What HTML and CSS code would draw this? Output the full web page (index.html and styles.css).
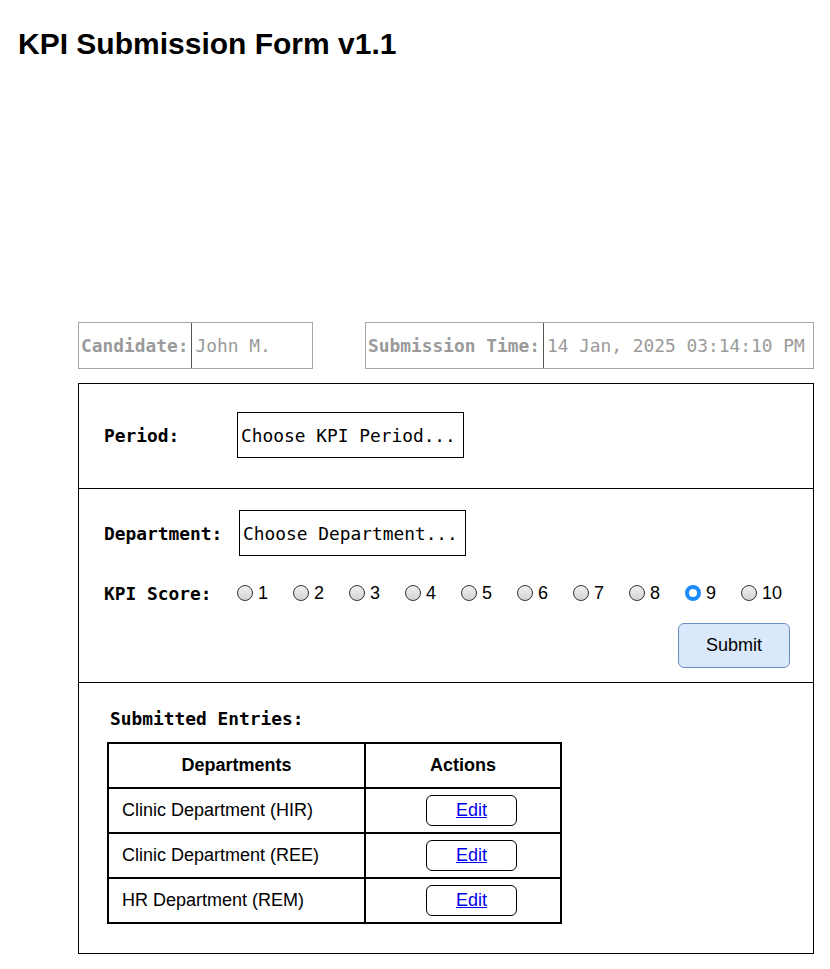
FILE: index.html
```html
<!DOCTYPE html>
<html>
<head>
<meta charset="utf-8">
<title>KPI Submission Form v1.1</title>
<link rel="stylesheet" href="styles.css">
</head>
<body>
<h1 class="title">KPI Submission Form v1.1</h1>
<div class="page">
  <div class="meta-row">
    <div class="meta meta-candidate">
      <span class="meta-label">Candidate:</span>
      <span class="meta-value">John M.</span>
    </div>
    <div class="meta meta-time">
      <span class="meta-label">Submission Time:</span>
      <span class="meta-value">14 Jan, 2025 03:14:10 PM</span>
    </div>
  </div>
  <div class="form-box">
    <section class="section section-period">
      <span class="label label-period">Period:</span>
      <div class="select select-period">Choose KPI Period...</div>
    </section>
    <section class="section section-dept">
      <div class="row row-dept">
        <span class="label label-dept">Department:</span>
        <div class="select select-dept">Choose Department...</div>
      </div>
      <div class="row row-score">
        <span class="label label-score">KPI Score:</span>
        <div class="radios">
          <label class="radio"><input type="radio" name="score"><span>1</span></label>
          <label class="radio"><input type="radio" name="score"><span>2</span></label>
          <label class="radio"><input type="radio" name="score"><span>3</span></label>
          <label class="radio"><input type="radio" name="score"><span>4</span></label>
          <label class="radio"><input type="radio" name="score"><span>5</span></label>
          <label class="radio"><input type="radio" name="score"><span>6</span></label>
          <label class="radio"><input type="radio" name="score"><span>7</span></label>
          <label class="radio"><input type="radio" name="score"><span>8</span></label>
          <label class="radio"><input type="radio" name="score" checked><span>9</span></label>
          <label class="radio"><input type="radio" name="score"><span>10</span></label>
        </div>
      </div>
      <div class="row row-submit">
        <button class="submit" type="button">Submit</button>
      </div>
    </section>
    <section class="section section-entries">
      <div class="entries-label">Submitted Entries:</div>
      <table class="entries">
        <thead>
          <tr><th class="col-dept">Departments</th><th class="col-act">Actions</th></tr>
        </thead>
        <tbody>
          <tr><td class="col-dept">Clinic Department (HIR)</td><td class="col-act"><span class="edit"><a href="#">Edit</a></span></td></tr>
          <tr><td class="col-dept">Clinic Department (REE)</td><td class="col-act"><span class="edit"><a href="#">Edit</a></span></td></tr>
          <tr><td class="col-dept">HR Department (REM)</td><td class="col-act"><span class="edit"><a href="#">Edit</a></span></td></tr>
        </tbody>
      </table>
    </section>
  </div>
</div>
</body>
</html>
```

FILE: styles.css
```css
* { box-sizing: border-box; }

body {
  margin: 0;
  background: #ffffff;
  font-family: "Liberation Sans", Arial, sans-serif;
  color: #000;
}

.title {
  margin: 0;
  padding: 25px 0 0 18px;
  font-size: 30px;
  font-weight: bold;
  line-height: 37px;
}

.page {
  padding: 260px 16px 16px 78px;
}

.meta-row {
  display: flex;
  gap: 52px;
  height: 47px;
}

.meta {
  display: flex;
  align-items: stretch;
  border: 1px solid #a6a6a6;
  font-family: "DejaVu Sans Mono", monospace;
  font-size: 17.85px;
  color: #9a9a9a;
}

.meta-candidate { width: 235px; }
.meta-time { width: 449px; }

.meta-label {
  display: flex;
  align-items: center;
  padding: 0 3px 0 2px;
  font-weight: bold;
  border-right: 1px solid #555;
}

.meta-value {
  display: flex;
  align-items: center;
  padding: 0 3px;
}

.form-box {
  margin-top: 14px;
  width: 736px;
  border: 1px solid #000;
}

.section + .section { border-top: 1px solid #000; }

.label {
  font-family: "DejaVu Sans Mono", monospace;
  font-weight: bold;
  font-size: 17.85px;
  flex-shrink: 0;
}

.select {
  height: 46px;
  width: 227px;
  flex-shrink: 0;
  border: 1px solid #000;
  display: flex;
  align-items: center;
  padding-left: 3px;
  font-family: "DejaVu Sans Mono", monospace;
  font-size: 17.85px;
  white-space: nowrap;
}

.section-period {
  height: 104px;
  display: flex;
  align-items: center;
  padding-left: 25px;
  padding-bottom: 2px;
}

.label-period { width: 133px; }

.section-dept {
  padding: 21px 23px 14px 25px;
  display: flex;
  flex-direction: column;
}

.row { display: flex; align-items: center; }

.label-dept { width: 135px; }

.row-score {
  margin-top: 26px;
  height: 22px;
}

.label-score { width: 133px; }

.radios { display: flex; flex-shrink: 0; }

.radio {
  width: 56px;
  flex-shrink: 0;
  display: flex;
  align-items: center;
  gap: 5px;
  font-size: 18px;
}

.radio input {
  appearance: none;
  -webkit-appearance: none;
  flex-shrink: 0;
  margin: 0;
  width: 16px;
  height: 16px;
  border-radius: 50%;
  border: 1px solid #333;
  background: linear-gradient(#f2f2f2, #d4d4d4);
}

.radio input:checked {
  border: 4px solid #1a8cff;
  background: #fff;
}

.row-submit {
  margin-top: 19px;
  justify-content: flex-end;
}

.submit {
  width: 112px;
  height: 45px;
  border: 1px solid #6c8ebf;
  border-radius: 6px;
  background: #dae8fc;
  font-family: "Liberation Sans", Arial, sans-serif;
  font-size: 18px;
  color: #000;
}

.section-entries {
  padding: 25px 0 29px 28px;
}

.entries-label {
  font-family: "DejaVu Sans Mono", monospace;
  font-weight: bold;
  font-size: 17.85px;
  margin-left: 3px;
  line-height: 22px;
  margin-bottom: 12px;
}

.entries {
  border-collapse: separate;
  border-spacing: 0;
  border: 1px solid #000;
  width: 455px;
  font-size: 18px;
}

.entries th, .entries td {
  border: 1px solid #000;
  padding: 0;
}

.entries th {
  height: 45px;
  font-weight: bold;
  text-align: center;
}

.entries td { height: 45px; }

.entries th.col-dept { width: 257px; }

.entries td.col-dept { padding-left: 13px; }

.entries td.col-act { padding-left: 60px; }

.edit {
  display: flex;
  align-items: center;
  justify-content: center;
  width: 91px;
  height: 31px;
  border: 1px solid #000;
  border-radius: 6px;
}

.edit a { color: #0000ee; text-decoration: underline; }
```
